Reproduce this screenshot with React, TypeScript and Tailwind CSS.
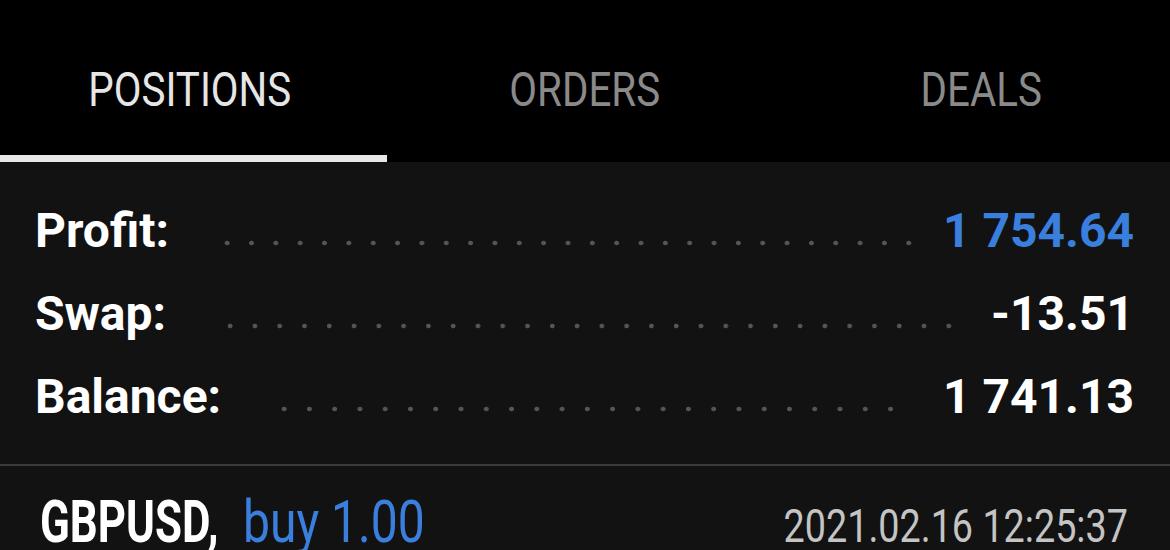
import React from "react";

const dots =
  "flex-1 self-end h-[6px] mb-[26px] bg-[radial-gradient(circle,#555555_2px,transparent_2.7px)] bg-[length:24.3px_6px] bg-repeat-space";

function Row({ label, value, valueClass, ml, mr }: { label: string; value: string; valueClass: string; ml: string; mr: string }) {
  return (
    <div className="flex h-[83px] items-center pl-[35px] pr-[36px]">
      <span className="text-[48px] leading-none font-bold text-white">{label}</span>
      <div className={`${dots} ${ml} ${mr}`} />
      <span className={`text-[48px] leading-none font-bold ${valueClass}`}>{value}</span>
    </div>
  );
}

export default function App() {
  return (
    <div className="w-[1170px] h-[550px] overflow-hidden bg-[#121212] font-['Roboto',sans-serif]">
      <div className="bg-black">
        <div className="flex h-[155px]">
          <div className="w-[390px] flex items-center justify-center pt-[25px] pr-[10px]">
            <span className="inline-block text-[48px] leading-none text-[#e6e6e6] scale-x-[0.84]">POSITIONS</span>
          </div>
          <div className="w-[390px] flex items-center justify-center pt-[25px]">
            <span className="inline-block text-[48px] leading-none text-[#8a8a8a] scale-x-[0.84]">ORDERS</span>
          </div>
          <div className="w-[390px] flex items-center justify-center pt-[25px] pl-[12px]">
            <span className="inline-block text-[48px] leading-none text-[#8a8a8a] scale-x-[0.84]">DEALS</span>
          </div>
        </div>
        <div className="h-[7px] w-[387px] bg-[#e8e8e8]" />
      </div>
      <div className="pt-[27px]">
        <Row label="Profit:" value="1 754.64" valueClass="text-[#3a7fdd]" ml="ml-[46px]" mr="mr-[22px]" />
        <Row label="Swap:" value="-13.51" valueClass="text-white" ml="ml-[52px]" mr="mr-[30px]" />
        <Row label="Balance:" value="1 741.13" valueClass="text-white" ml="ml-[51px]" mr="mr-[40px]" />
      </div>
      <div className="mt-[26px] h-[2px] bg-[#3a3a3a]" />
      <div className="flex items-baseline justify-between pl-[40px] pr-[42px] pt-[26px]">
        <div className="flex items-baseline whitespace-nowrap text-[60px] leading-none">
          <span className="inline-block origin-left scale-x-[0.73] w-[177px] font-bold text-white">GBPUSD,</span>
          <span className="inline-block origin-left scale-x-[0.8] ml-[26px] text-[#3a7fdd]">buy 1.00</span>
        </div>
        <span className="inline-block origin-right scale-x-[0.82] text-[46px] leading-none text-[#c4c4c4] whitespace-nowrap">
          2021.02.16 12:25:37
        </span>
      </div>
    </div>
  );
}
